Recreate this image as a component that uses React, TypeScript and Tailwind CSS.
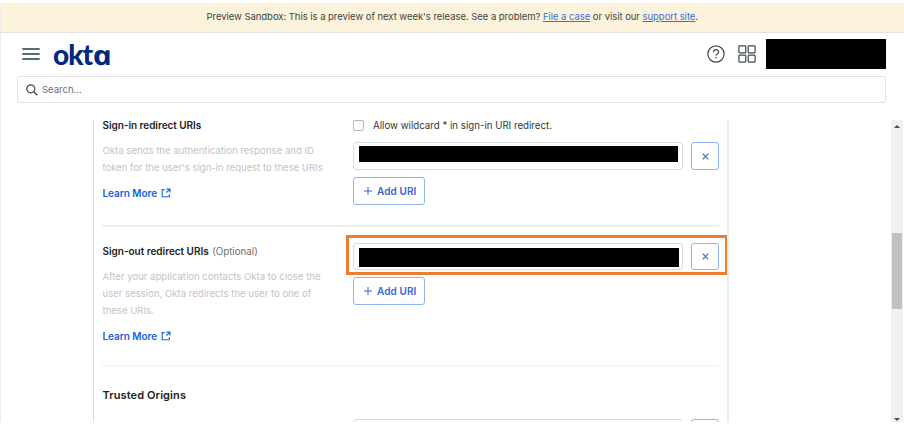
import type { ReactNode } from "react";

function ExternalLink() {
  return (
    <svg width="10" height="10" viewBox="0 0 10 10" fill="none" stroke="#1662dd" strokeWidth="1.1">
      <path d="M3.6 1.6H1.2V8.8H8.4V6.2" />
      <path d="M5.4 1.1H9V4.4M8.9 1.2L5.6 4.5" />
    </svg>
  );
}

function LearnMore() {
  return (
    <a className="flex h-[14px] items-center gap-[4px] text-[10px] font-semibold leading-[14px] tracking-[-0.04px] text-[#1662dd]">
      <span>Learn More</span>
      <ExternalLink />
    </a>
  );
}

function AddButton() {
  return (
    <button className="flex h-[28px] w-[72px] items-center gap-[5px] rounded-[3px] border border-[#8fb4f3] bg-white pl-[10px] text-[10px] font-semibold tracking-[0.1px] text-[#3366d6]">
      <svg width="8" height="8" viewBox="0 0 8 8" stroke="#3366d6" strokeWidth="1">
        <path d="M4 0V8M0 4H8" />
      </svg>
      <span>Add URI</span>
    </button>
  );
}

function UriRow({ children, short = false }: { children?: ReactNode; short?: boolean }) {
  return (
    <div className={`flex shrink-0 gap-[8px] ${short ? "h-[27px]" : "h-[28px]"}`}>
      <div className="w-[330px] rounded-[3px] border border-[#dcdce0] bg-white pl-[5px]">{children}</div>
      <button className="flex w-[28px] items-center justify-center rounded-[3px] border border-[#8fb4f3] bg-white">
        <svg width="7" height="7" viewBox="0 0 7 7" stroke="#3366d6" strokeWidth="1.1">
          <path d="M0.7 0.7L6.3 6.3M6.3 0.7L0.7 6.3" />
        </svg>
      </button>
    </div>
  );
}

export default function App() {
  return (
    <div className="flex h-[432px] w-[904px] flex-col overflow-hidden bg-white pt-[3px] font-['Inter',sans-serif] text-[10px] text-[#1d1d21]">
      <div className="flex h-[419px] flex-col border-l border-[#ededed]">
        <div className="flex h-[30px] shrink-0 items-center border-b border-[#e2e2e2] bg-[#fbf3db] pb-[1px] pl-[205.5px] text-[9.5px] text-[#44443f]">
          <p className="whitespace-nowrap tracking-[-0.045px]">
            Preview Sandbox: This is a preview of next week's release. See a problem?{" "}
            <a className="text-[#3f6fd8] underline">File a case</a> or visit our{" "}
            <a className="text-[#3f6fd8] underline">support site</a>.
          </p>
        </div>

        <header className="flex h-[43px] shrink-0 items-center pb-[2px] pl-[21px]">
          <svg width="18" height="14" viewBox="0 0 18 14" stroke="#5b6b73" strokeWidth="1.8" strokeLinecap="round">
            <path d="M1 2H17M1 7H17M1 12H17" />
          </svg>
          <div className="ml-[13px] w-[58px] whitespace-nowrap pt-[2px] font-['Lato',sans-serif] text-[28px] font-black leading-[28px] tracking-[-1px] text-[#00297a]">
            okt<span className="inline-block origin-left skew-x-[12deg] scale-x-[1.2] font-['Open_Sans',sans-serif] text-[27px] font-bold italic leading-[28px]">a</span>
          </div>
          <svg className="ml-[596px]" width="18" height="18" viewBox="0 0 18 18" fill="none" stroke="#41484d" strokeWidth="1.2">
            <circle cx="9" cy="9" r="8.1" />
            <path d="M6.5 7.2C6.5 3.8 11.6 3.9 11.6 6.9C11.6 8.8 9.1 8.8 9.1 10.8" />
            <path d="M9.1 12.1V13.5" />
          </svg>
          <svg className="ml-[13px]" width="18" height="18" viewBox="0 0 18 18" fill="none" stroke="#41484d" strokeWidth="1.2">
            <rect x="0.9" y="0.9" width="6.9" height="6.9" rx="0.8" />
            <rect x="10.2" y="0.9" width="6.9" height="6.9" rx="0.8" />
            <rect x="0.9" y="10.2" width="6.9" height="6.9" rx="0.8" />
            <rect x="10.2" y="10.2" width="6.9" height="6.9" rx="0.8" />
          </svg>
          <div className="ml-[10px] h-[30px] w-[120px] bg-black" />
        </header>

        <div className="ml-[16px] flex h-[27px] w-[869px] shrink-0 items-center gap-[4px] rounded-[3px] border border-[#e2e2e4] pl-[8px] text-[9.5px] text-[#6e6e78]">
          <svg width="12" height="12" viewBox="0 0 12 12" fill="none" stroke="#3f4a50" strokeWidth="1.3">
            <circle cx="4.8" cy="4.8" r="4" />
            <path d="M7.7 7.7L11.3 11.3" />
          </svg>
          <span className="pt-[2px]">Search...</span>
        </div>

        <div className="mt-[17px] flex h-[302px] shrink-0">
          <main className="relative ml-[92px] flex w-[636px] flex-col overflow-hidden border-l border-r-2 border-l-[#dedede] border-r-[#ececec] pl-[8px]">
            <section className="flex h-[105px] w-[617px] shrink-0">
              <div className="w-[251px] pl-[0.5px]">
                <h3 className="mt-[-3px] text-[10px] font-semibold leading-[16px] tracking-[-0.04px]">Sign-in redirect URIs</h3>
                <p className="mb-[10px] mt-[9px] whitespace-nowrap text-[9.6px] leading-[17px] tracking-[-0.01px] text-[#c3c3c9]">
                  Okta sends the authentication response and ID
                  <br />
                  <span className="tracking-[-0.04px]">token for the user's sign-in request to these URIs</span>
                </p>
                <LearnMore />
              </div>
              <div className="flex w-[366px] flex-col">
                <label className="flex h-[11px] items-center gap-[9px] text-[9.7px] text-[#34343a]">
                  <span className="h-[11px] w-[11px] rounded-[2px] border border-[#b5b5bd]" />
                  <span className="whitespace-nowrap pt-[2px]">Allow wildcard * in sign-in URI redirect.</span>
                </label>
                <div className="mt-[11px]">
                  <UriRow>
                    <div className="mt-[3px] h-[16px] w-[319px] bg-black" />
                  </UriRow>
                </div>
                <div className="mt-[7px]">
                  <AddButton />
                </div>
              </div>
            </section>

            <section className="flex h-[140px] w-[617px] shrink-0 border-t-2 border-[#f0f0f0]">
              <div className="w-[251px] pl-[0.5px] pt-[16px]">
                <h3 className="text-[10px] font-semibold leading-[16px] tracking-[-0.02px]">
                  Sign-out redirect URIs{" "}
                  <span className="ml-[1px] text-[9.8px] font-normal text-[#6e6e78]">(Optional)</span>
                </h3>
                <p className="mb-[10px] mt-[8px] whitespace-nowrap text-[9.6px] leading-[17px] tracking-[-0.01px] text-[#c3c3c9]">
                  After your application contacts Okta to close the
                  <br />
                  user session, Okta redirects the user to one of
                  <br />
                  these URIs.
                </p>
                <LearnMore />
              </div>
              <div className="flex w-[366px] flex-col pt-[16px]">
                <UriRow short>
                  <div className="mt-[4px] h-[19px] w-[320px] bg-black" />
                </UriRow>
                <div className="mt-[7px]">
                  <AddButton />
                </div>
              </div>
            </section>

            <section className="flex h-[80px] w-[617px] shrink-0 border-t-2 border-[#f5f5f5]">
              <h2 className="w-[251px] pl-[0.5px] pt-[19px] text-[11px] font-semibold leading-[18px] tracking-[0.1px]">Trusted Origins</h2>
              <div className="pt-[52px]">
                <UriRow />
              </div>
            </section>

            <div className="absolute left-[252px] top-[115px] h-[40px] w-[382px] border-[3px] border-[#ed7d31]" />
          </main>

          <div className="ml-[162px] flex w-[12px] flex-col items-center bg-[#f1f1f1]">
            <svg className="mt-[5px]" width="6" height="3" viewBox="0 0 6 3" fill="#4d4d4d">
              <path d="M3 0L6 3H0Z" />
            </svg>
            <div className="mt-[105px] h-[76px] w-[10px] bg-[#c1c1c1]" />
            <svg className="mt-[109px]" width="6" height="3" viewBox="0 0 6 3" fill="#4d4d4d">
              <path d="M3 3L6 0H0Z" />
            </svg>
          </div>
        </div>
      </div>
    </div>
  );
}
